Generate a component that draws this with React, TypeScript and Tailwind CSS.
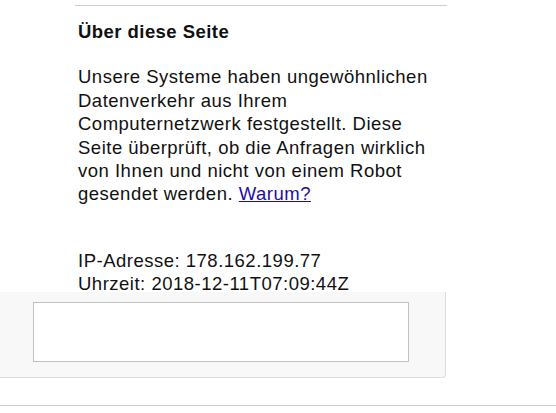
// "Unusual traffic" notice: about-this-page text and an empty captcha frame.

export default function App() {
  return (
    <div className="h-[413px] w-[556px] overflow-hidden bg-white font-['Liberation_Sans',Arial,sans-serif] text-[18.5px] leading-[23.4px] tracking-[0.5px] text-[#111]">
      <div className="ml-[75px] mt-[5px] h-px w-[372px] bg-[#cfcfcf]" />

      <div className="ml-[78px] w-[358px]">
        <h2 className="mt-[14px] font-bold tracking-[0.45px]">Über diese Seite</h2>
        <p className="mt-[22px]">
          Unsere Systeme haben ungewöhnlichen Datenverkehr aus Ihrem Computernetzwerk festgestellt. Diese Seite
          überprüft, ob die Anfragen wirklich von Ihnen und nicht von einem Robot gesendet werden.{' '}
          <a href="#" className="text-[#1a0dab] underline">
            Warum?
          </a>
        </p>
        <div className="mt-[43px] h-[43px] leading-[23px]">
          <div>IP-Adresse: 178.162.199.77</div>
          <div>Uhrzeit: 2018-12-11T07:09:44Z</div>
        </div>
      </div>

      <div className="w-[446px] rounded-br-[4px] border-r border-b border-[#dcdcdc] bg-[#f8f8f8] pt-[10px] pb-[15px] pl-[33px]">
        <div className="h-[60px] w-[376px] border border-[#c2c2c2] bg-white" />
      </div>

      <div className="mt-[27px] h-px w-full bg-[#cccccc]" />
    </div>
  )
}
